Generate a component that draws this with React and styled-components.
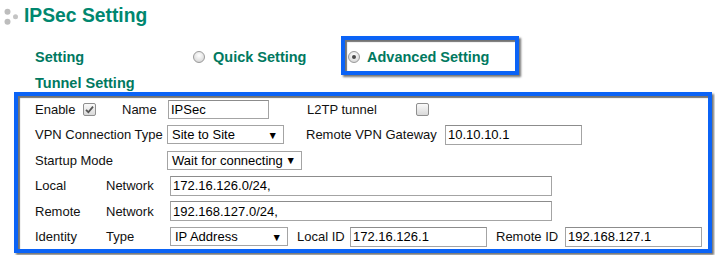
import styled, { createGlobalStyle } from "styled-components";

const GlobalStyle = createGlobalStyle`
    body {
        margin: 0;
        background: #ffffff;
        font-family: "Liberation Sans", Arial, sans-serif;
    }
`;

export default function App() {
    return (
        <>
            <GlobalStyle />
            <Page>
                <Title>
                    <svg width="17" height="18" viewBox="0 0 17 18">
                        <circle cx="3.5" cy="4.7" r="3" fill="#bdbdbd" />
                        <circle cx="3.5" cy="14.7" r="3" fill="#bdbdbd" />
                        <circle cx="11.5" cy="9.7" r="2.5" fill="#c4c4c4" />
                    </svg>
                    <h1>IPSec Setting</h1>
                </Title>

                <SettingRow>
                    <SectionLabel $width={158}>Setting</SectionLabel>
                    <Option $width={148}>
                        <Radio />
                        <span>Quick Setting</span>
                    </Option>
                    <Highlight>
                        <Option>
                            <Radio $checked />
                            <span>Advanced Setting</span>
                        </Option>
                    </Highlight>
                </SettingRow>

                <SectionLabel $pad>Tunnel Setting</SectionLabel>

                <FormBox>
                    <FormRow>
                        <Cell $w={48}>Enable</Cell>
                        <Cell $w={39}>
                            <Check $checked>
                                <svg width="9" height="9" viewBox="0 0 9 9">
                                    <path d="M1 4.8 L3.4 7.2 L8 1.6" stroke="#555" strokeWidth="1.8" fill="none" />
                                </svg>
                            </Check>
                        </Cell>
                        <Cell $w={46}>Name</Cell>
                        <TextBox $w={101} $h={19}>IPSec</TextBox>
                        <Spacer $w={38} />
                        <Cell $w={109}>L2TP tunnel</Cell>
                        <Check />
                    </FormRow>

                    <FormRow>
                        <Cell $w={132}>VPN Connection Type</Cell>
                        <Select $w={117}>
                            <span>Site to Site</span>
                            <Arrow>▼</Arrow>
                        </Select>
                        <Spacer $w={22} />
                        <Cell $w={139}>Remote VPN Gateway</Cell>
                        <TextBox $w={137}>10.10.10.1</TextBox>
                    </FormRow>

                    <FormRow>
                        <Cell $w={132}>Startup Mode</Cell>
                        <Select $w={135}>
                            <span>Wait for connecting</span>
                            <Arrow>▼</Arrow>
                        </Select>
                    </FormRow>

                    <FormRow>
                        <Cell $w={71}>Local</Cell>
                        <Cell $w={64}>Network</Cell>
                        <TextBox $w={382}>172.16.126.0/24,</TextBox>
                    </FormRow>

                    <FormRow>
                        <Cell $w={71}>Remote</Cell>
                        <Cell $w={64}>Network</Cell>
                        <TextBox $w={382}>192.168.127.0/24,</TextBox>
                    </FormRow>

                    <FormRow>
                        <Cell $w={71}>Identity</Cell>
                        <Cell $w={64}>Type</Cell>
                        <Select $w={118}>
                            <span>IP Address</span>
                            <Arrow>▼</Arrow>
                        </Select>
                        <Spacer $w={9} />
                        <Cell $w={53}>Local ID</Cell>
                        <TextBox $w={137}>172.16.126.1</TextBox>
                        <Spacer $w={9} />
                        <Cell $w={69}>Remote ID</Cell>
                        <TextBox $w={137}>192.168.127.1</TextBox>
                    </FormRow>
                </FormBox>
            </Page>
        </>
    );
}

const Page = styled.div`
    width: 715px;
    height: 255px;
    overflow: hidden;
`;

const Title = styled.div`
    height: 36px;
    display: flex;
    align-items: flex-start;
    gap: 3px;
    padding: 5px 0 0 4px;
    box-sizing: border-box;

    svg {
        margin-top: 2px;
    }

    h1 {
        margin: 0;
        font-size: 19.3px;
        line-height: 22px;
        font-weight: 700;
        color: #00876f;
    }
`;

const SettingRow = styled.div`
    height: 39px;
    display: flex;
    align-items: center;
    padding-left: 35px;
`;

const SectionLabel = styled.div`
    width: ${(p) => (p.$width ? `${p.$width}px` : "auto")};
    padding-left: ${(p) => (p.$pad ? "35px" : "0")};
    padding-top: ${(p) => (p.$pad ? "0" : "3px")};
    font-size: 14.5px;
    line-height: 17px;
    font-weight: 700;
    color: #00795f;
`;

const Option = styled.div`
    width: ${(p) => (p.$width ? `${p.$width}px` : "auto")};
    display: flex;
    align-items: center;
    gap: 8px;
    padding-top: 3px;
    font-size: 14.5px;
    font-weight: 700;
    color: #00795f;
`;

const Radio = styled.span`
    width: 12px;
    height: 12px;
    box-sizing: border-box;
    border-radius: 50%;
    border: 1px solid #9a9a9a;
    background: radial-gradient(circle at 50% 35%, #ffffff 0%, #e2e2e2 60%, #c8c8c8 100%);
    display: flex;
    align-items: center;
    justify-content: center;

    &::after {
        content: "";
        display: ${(p) => (p.$checked ? "block" : "none")};
        width: 4px;
        height: 4px;
        border-radius: 50%;
        background: #4a4a4a;
    }
`;

const Highlight = styled.div`
    width: 178px;
    height: 39px;
    box-sizing: border-box;
    border: 4px solid #0b63f6;
    box-shadow: inset 2px 2px 1px rgba(0, 0, 0, 0.55), 2px 2px 2px rgba(0, 0, 0, 0.55);
    display: flex;
    align-items: center;
    padding-left: 3px;

    ${Option} {
        gap: 7px;
        padding-top: 2px;
    }
`;

const FormBox = styled.div`
    margin-left: 14px;
    width: 698px;
    height: 161px;
    box-sizing: border-box;
    border: 4px solid #0b63f6;
    box-shadow: inset 2px 2px 1px rgba(0, 0, 0, 0.55), 2px 2px 2px rgba(0, 0, 0, 0.55);
    display: flex;
    flex-direction: column;
    gap: 5.6px;
    padding: 3px 0 0 17px;
    font-size: 13px;
    color: #111;
`;

const FormRow = styled.div`
    height: 20px;
    display: flex;
    align-items: center;
`;

const Cell = styled.div`
    width: ${(p) => p.$w}px;
    flex: none;
    display: flex;
    align-items: center;
    white-space: nowrap;
`;

const Spacer = styled.div`
    width: ${(p) => p.$w}px;
    flex: none;
`;

const TextBox = styled.div`
    width: ${(p) => p.$w}px;
    height: ${(p) => p.$h || 20}px;
    flex: none;
    box-sizing: border-box;
    border: 1px solid #a4a4a4;
    border-top-color: #8c8c8c;
    padding: 0 2px;
    display: flex;
    align-items: center;
    background: #fff;
    color: #000;
    white-space: nowrap;
`;

const Select = styled.div`
    width: ${(p) => p.$w}px;
    height: 19px;
    flex: none;
    box-sizing: border-box;
    border: 1px solid #a4a4a4;
    padding: 0 5px 0 4px;
    display: flex;
    align-items: center;
    justify-content: space-between;
    background: #fff;
    color: #000;
    white-space: nowrap;
`;

const Arrow = styled.span`
    font-size: 10.5px;
    color: #000;
`;

const Check = styled.span`
    width: 13px;
    height: 13px;
    flex: none;
    box-sizing: border-box;
    border: 1px solid #8f8f8f;
    border-radius: 2px;
    background: linear-gradient(#fafafa, #d9d9d9);
    display: flex;
    align-items: center;
    justify-content: center;
`;
